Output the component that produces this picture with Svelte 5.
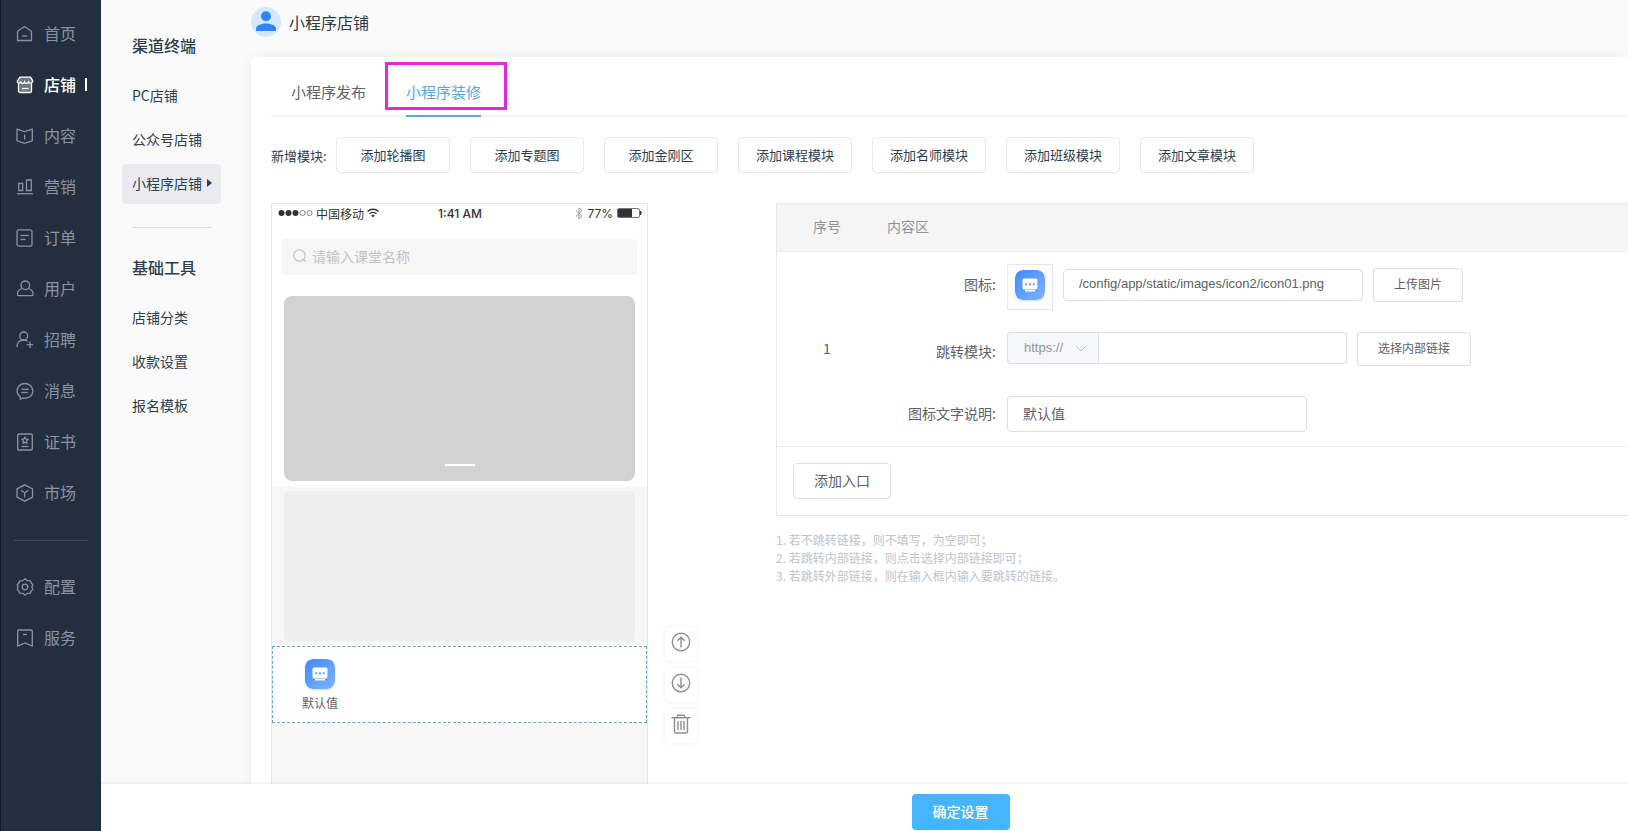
<script lang="ts">
	type NavItem = { label: string; paths: string[]; active?: boolean };

	const mainNav: NavItem[] = [
		{ label: '首页', paths: ['M1.5 6.3v9.2h14V6.3l-7-4.8z', 'M6 11h5.5'] },
		{
			label: '店铺',
			active: true,
			paths: [
				'M4 1.2h10.5l2.3 3.6c.2 2.2-3 3.4-4.2 1.2-.8 2-3.4 2-4 0-.6 2-3.2 2-4 0C3.4 8.2.8 7 1.5 4.8z',
				'M2.500 7.600v7.400a1.500 1.500 0 0 0 1.500 1.500h10a1.500 1.500 0 0 0 1.500-1.500V7.600',
				'M6 12.500h6.500'
			]
		},
		{ label: '内容', paths: ['M1 2.200l7.500 2.300 7.800-2.300v11.600l-7.800 2.500L1 13.800z', 'M8.600 7.500v5'] },
		{ label: '营销', paths: ['M2.700 5.500h4v7h-4z', 'M10.500 2h4.800v10.500h-4.800z', 'M1 15.700h16'] },
		{
			label: '订单',
			paths: ['M3 .8h11a2 2 0 0 1 2 2v12.400a2 2 0 0 1-2 2H3a2 2 0 0 1-2-2V2.800a2 2 0 0 1 2-2z', 'M4.500 6.500h8.500', 'M4.500 10.500h5']
		},
		{
			label: '用户',
			paths: ['M9.300 1a4.300 4.300 0 1 1 0 8.600 4.300 4.300 0 0 1 0-8.600z', 'M6 8.500c-2.600 1-4.500 2.800-4.500 5v1.200q0 1 1 1h13.500q1 0 1-1v-1.200c0-2.200-1.900-4-4.500-5']
		},
		{
			label: '招聘',
			paths: ['M7.700 1a4 4 0 1 1 0 8 4 4 0 0 1 0-8z', 'M1 16c0-4 2.500-7 6.700-7 1.500 0 2.800.4 3.800 1.300', 'M14 10.500v6.500', 'M10.800 13.700h6.500']
		},
		{
			label: '消息',
			paths: ['M4.300 14.500v2.600l3.300-1.200c5 1 9.200-2.200 9.200-6.800 0-4.300-3.500-7.600-7.900-7.600S1 4.800 1 9c0 2.200 1.200 4.300 3.300 5.500z', 'M5.300 7.300h7.500', 'M5.300 10.500h6.500']
		},
		{
			label: '证书',
			paths: ['M3 1h12q1.300 0 1.300 1.300v13.400q0 1.300-1.300 1.300H3q-1.300 0-1.300-1.300V2.300Q1.700 1 3 1z', 'M9 4.300l1 1.700 2 .5-1.300 1.600.2 2L9 9.300l-1.900.8.2-2L6 6.500 8 6z', 'M5.500 13.500h7']
		},
		{ label: '市场', paths: ['M8.700.8l7.800 4v8.400l-7.800 4-7.700-4V4.800z', 'M5 6.300l3.700 2.500 3.800-2.500', 'M8.700 8.800v4.500'] }
	];

	const extraNav: NavItem[] = [
		{
			label: '配置',
			paths: [
				'M9 .8l2.300 1.900 3 .2 1.200 2.600 1.300.9-.9 2.600.9 2.600-1.300 1-1.200 2.500-3 .2L9 17.200l-2.300-1.900-3-.2-1.200-2.500-1.300-1L2.100 9l-.9-2.600 1.300-.9 1.200-2.600 3-.2z',
				'M9 6.200a2.800 2.800 0 1 1 0 5.600 2.800 2.800 0 0 1 0-5.600z'
			]
		},
		{ label: '服务', paths: ['M3 1h12q1.300 0 1.300 1.300V17L9 14l-7.300 3V2.300Q1.700 1 3 1z', 'M7 5.500h4'] }
	];

	const groups = [
		{ title: '渠道终端', items: ['PC店铺', '公众号店铺', '小程序店铺'] },
		{ title: '基础工具', items: ['店铺分类', '收款设置', '报名模板'] }
	];
	const currentPage = '小程序店铺';

	const tabs = ['小程序发布', '小程序装修'];
	let activeTab = $state('小程序装修');

	const modules = ['轮播图', '专题图', '金刚区', '课程模块', '名师模块', '班级模块', '文章模块'];

	const hints = [
		'若不跳转链接，则不填写，为空即可；',
		'若跳转内部链接，则点击选择内部链接即可；',
		'若跳转外部链接，则在输入框内输入要跳转的链接。'
	];

	let keyword = $state('');
	let iconUrl = $state('/config/app/static/images/icon2/icon01.png');
	let protocol = $state('https://');
	let link = $state('');
	let caption = $state('默认值');
</script>

{#snippet navLink(item: NavItem)}
	<a href="#nav" class="nav-item" class:active={item.active}>
		<svg viewBox="0 0 18 18" aria-hidden="true">
			{#each item.paths as d}
				<path {d} />
			{/each}
		</svg>
		<span>{item.label}</span>
	</a>
{/snippet}

{#snippet entryIcon()}
	<svg class="entry-icon" viewBox="0 0 30 30" aria-hidden="true">
		<defs>
			<linearGradient id="entry-bg" x1="0" y1="0" x2="1" y2="1">
				<stop offset="0" stop-color="#3f8bf9" />
				<stop offset="1" stop-color="#7fb3ff" />
			</linearGradient>
		</defs>
		<rect width="30" height="30" rx="8" fill="url(#entry-bg)" />
		<rect x="8" y="10" width="15" height="11" rx="2" fill="#4b86e2" opacity="0.5" />
		<rect x="7.500" y="8.500" width="15" height="11" rx="1.500" fill="#fff" />
		<path d="M10 20.800h10" stroke="#fff" stroke-width="1.400" />
		<path d="M10.200 14.200h2M14 14.200h2M17.800 14.200h2" stroke="#6ba5fa" stroke-width="2" />
	</svg>
{/snippet}

<div class="shell">
	<nav class="sidebar">
		{#each mainNav as item}
			{@render navLink(item)}
		{/each}
		<hr />
		{#each extraNav as item}
			{@render navLink(item)}
		{/each}
	</nav>

	<div class="workspace">
		<div class="body">
			<aside class="subnav">
				{#each groups as group}
					<section>
						<h2>{group.title}</h2>
						{#each group.items as item}
							<a href="#page" class:current={item === currentPage}>
								{item}
								{#if item === currentPage}<i class="caret"></i>{/if}
							</a>
						{/each}
					</section>
				{/each}
			</aside>

			<main>
				<header>
					<svg viewBox="0 0 30 30" aria-hidden="true">
						<circle cx="15" cy="15" r="15" fill="#d5e8ff" />
						<circle cx="15" cy="9.300" r="5" fill="#2e86ff" />
						<path d="M5 24v-2.500c0-3.500 6-5 10-5s10 1.500 10 5V24z" fill="#2e86ff" />
					</svg>
					<h1>小程序店铺</h1>
				</header>

				<div class="card">
					<div class="tabs" role="tablist">
						{#each tabs as tab}
							<button
								type="button"
								role="tab"
								aria-selected={tab === activeTab}
								class:selected={tab === activeTab}
								onclick={() => (activeTab = tab)}
							>
								{tab}
							</button>
						{/each}
					</div>

					<div class="modules">
						<span>新增模块:</span>
						{#each modules as name}
							<button type="button" class="btn">添加{name}</button>
						{/each}
					</div>

					<div class="editor">
						<div class="phone">
							<div class="screen-top">
								<div class="status">
									<div class="carrier">
										<svg width="35" height="8" viewBox="0 0 35 8" aria-hidden="true">
											<g fill="#333">
												<circle cx="3.500" cy="4" r="3" />
												<circle cx="10.500" cy="4" r="3" />
												<circle cx="17.500" cy="4" r="3" />
											</g>
											<g fill="none" stroke="#555" stroke-width="0.700">
												<circle cx="24.500" cy="4" r="2.600" />
												<circle cx="31.500" cy="4" r="2.600" />
											</g>
										</svg>
										<span>中国移动</span>
										<svg width="12" height="10" viewBox="0 0 12 10" aria-hidden="true">
											<g fill="none" stroke="#333" stroke-width="1.500">
												<path d="M.6 3.500a7.600 7.600 0 0 1 10.800 0" />
												<path d="M2.700 5.800a4.700 4.700 0 0 1 6.600 0" />
											</g>
											<path d="M4.200 7.600a2.600 2.600 0 0 1 3.600 0L6 9.500z" fill="#333" />
										</svg>
									</div>
									<strong>1:41 AM</strong>
									<div class="power">
										<svg width="8" height="13" viewBox="0 0 8 13" aria-hidden="true">
											<path d="M1 3.500l6 5.700-3 2.800V1l3 2.800L1 9.500" fill="none" stroke="#999" />
										</svg>
										<span>77%</span>
										<svg width="25" height="10" viewBox="0 0 25 10" aria-hidden="true">
											<rect x=".5" y=".5" width="22" height="9" rx="1.500" fill="none" stroke="#777" />
											<rect x="1" y="1" width="14" height="8" fill="#333" />
											<path d="M23.500 3.200q1.500 1.800 0 3.600z" fill="#333" stroke="#333" />
										</svg>
									</div>
								</div>
								<label class="search">
									<svg width="14" height="14" viewBox="0 0 14 14" aria-hidden="true">
										<circle cx="6.500" cy="6.500" r="5.700" />
										<path d="M10.500 10.500l2.500 2.500" />
									</svg>
									<input type="text" aria-label="搜索" placeholder="请输入课堂名称" bind:value={keyword} />
								</label>
								<div class="banner"><i></i></div>
							</div>
							<div class="placeholder"></div>
							<div class="entries">
								<div class="entry">
									{@render entryIcon()}
									<span>{caption}</span>
								</div>
							</div>
						</div>

						<div class="tools">
							<button type="button" aria-label="上移">
								<svg viewBox="0 0 20 20"><circle cx="10" cy="10" r="8.700" /><path d="M10 15.500V5.500M6.300 8.800L10 5.200l3.700 3.600" /></svg>
							</button>
							<button type="button" aria-label="下移">
								<svg viewBox="0 0 20 20"><circle cx="10" cy="10" r="8.700" /><path d="M10 4.500v10M6.300 11.200l3.700 3.600 3.700-3.600" /></svg>
							</button>
							<button type="button" aria-label="删除">
								<svg viewBox="0 0 20 20"><path d="M.5 3.800h19M6 3.500l.8-2.300h6.400l.8 2.300M3.500 4v13.500q0 1.500 1.500 1.500h10q1.500 0 1.500-1.500V4M7 7v9M10 7v9M13 7v9" /></svg>
							</button>
						</div>

						<div class="settings">
							<div class="panel">
								<table>
									<thead>
										<tr>
											<th class="index">序号</th>
											<th>内容区</th>
										</tr>
									</thead>
									<tbody>
										<tr>
											<td class="index">1</td>
											<td class="content">
												<div class="field with-preview">
													<label for="icon-url">图标:</label>
													<div class="preview">{@render entryIcon()}</div>
													<input id="icon-url" class="box" type="text" bind:value={iconUrl} />
													<button type="button" class="btn small">上传图片</button>
												</div>
												<div class="field linked">
													<label for="link">跳转模块:</label>
													<div class="group">
														<div class="prepend">
															<select aria-label="协议" bind:value={protocol}>
																<option>https://</option>
																<option>http://</option>
															</select>
															<svg width="12" height="7" viewBox="0 0 12 7" aria-hidden="true"><path d="M1 1l5 5 5-5" /></svg>
														</div>
														<input id="link" type="text" bind:value={link} />
													</div>
													<button type="button" class="btn small">选择内部链接</button>
												</div>
												<div class="field">
													<label for="caption">图标文字说明:</label>
													<input id="caption" class="box tall" type="text" bind:value={caption} />
												</div>
											</td>
										</tr>
									</tbody>
								</table>
								<div class="panel-foot">
									<button type="button" class="btn add">添加入口</button>
								</div>
							</div>
							<div class="hints">
								{#each hints as hint, i}
									<p>{i + 1}. {hint}</p>
								{/each}
							</div>
						</div>
					</div>
				</div>
			</main>
		</div>

		<footer>
			<button type="button" class="submit">确定设置</button>
		</footer>
	</div>
</div>

<style>
	:global(body) {
		margin: 0;
	}
	.shell {
		--border: #dcdfe6;
		--ink: #2c3e50;
		--text: #606266;
		display: flex;
		height: 100vh;
		overflow: hidden;
		background: #fafafa;
		color: var(--text);
		font-family: 'Noto Sans CJK SC', sans-serif;
		font-size: 14px;
	}
	.shell * {
		box-sizing: border-box;
	}
	button,
	input,
	select {
		font-family: inherit;
		color: inherit;
	}
	button {
		cursor: pointer;
	}
	a {
		text-decoration: none;
	}

	/* dark primary navigation */
	.sidebar {
		flex: none;
		width: 101px;
		padding-top: 8px;
		border-left: 1px solid #0f1a26;
		background: #232f3f;
	}
	.nav-item {
		display: flex;
		align-items: center;
		gap: 10px;
		height: 51px;
		padding-left: 15px;
		color: #8a93a3;
		font-size: 16px;
	}
	.nav-item span {
		padding-bottom: 2px;
	}
	.nav-item svg {
		width: 18px;
		height: 18px;
		fill: none;
		stroke: currentColor;
		stroke-width: 1.3;
	}
	.nav-item.active {
		color: #fff;
		font-weight: 500;
	}
	.nav-item.active svg {
		fill: rgba(255, 255, 255, 0.35);
	}
	.nav-item.active::after {
		content: '';
		width: 2px;
		height: 13px;
		margin-left: -1px;
		background: #fff;
	}
	.sidebar hr {
		height: 1px;
		margin: 22px 13px 20px;
		border: 0;
		background: #424d5c;
	}

	.workspace {
		display: flex;
		flex: 1;
		flex-direction: column;
		min-width: 0;
	}
	.body {
		display: flex;
		flex: 1;
		min-height: 0;
		overflow: hidden;
	}

	.subnav {
		flex: none;
		width: 150px;
		padding: 17px 30px 0 21px;
	}
	.subnav h2 {
		margin: 0 0 19px;
		padding: 16px 10px 0;
		color: var(--ink);
		font-size: 16px;
		font-weight: 500;
		line-height: 24px;
	}
	.subnav a {
		display: flex;
		align-items: center;
		height: 40px;
		margin-bottom: 4px;
		padding: 0 0 2px 10px;
		border-radius: 4px;
		color: var(--ink);
		white-space: nowrap;
	}
	.subnav a.current {
		background: #e9ebf0;
	}
	.caret {
		margin-left: 5px;
		border: 4px solid transparent;
		border-right: 0;
		border-left: 5px solid var(--ink);
	}
	.subnav section + section::before {
		content: '';
		display: block;
		height: 1px;
		margin: 23px 9px 11px 10px;
		background: #dcdee2;
	}

	main {
		display: flex;
		flex: 1;
		flex-direction: column;
		min-width: 0;
	}
	header {
		display: flex;
		align-items: center;
		gap: 8px;
		padding: 7px 0 20px;
	}
	header svg {
		width: 30px;
		height: 30px;
	}
	h1 {
		margin: 0;
		color: #303a46;
		font-size: 16px;
		font-weight: 400;
		line-height: 30px;
	}

	.card {
		display: flex;
		flex: 1;
		flex-direction: column;
		padding: 5px 0 0 20px;
		border-radius: 5px 0 0 0;
		background: #fff;
		box-shadow: 0 0 12px rgba(0, 0, 0, 0.06);
	}
	.tabs {
		display: flex;
		gap: 40px;
		padding-left: 20px;
		border-bottom: 2px solid #f5f5f5;
	}
	.tabs button {
		position: relative;
		height: 55px;
		margin-bottom: -2px;
		padding: 6px 0 0;
		border: 0;
		border-bottom: 2px solid transparent;
		background: none;
		font-size: 15px;
		line-height: 43px;
	}
	.tabs button.selected {
		border-color: #5fa8d3;
		color: #55a9e2;
	}
	.tabs button.selected::before {
		content: '';
		position: absolute;
		inset: 0 -26px 5px -21px;
		border: 3px solid #df2bdf;
	}

	.btn {
		height: 36px;
		padding: 0 0 2px;
		border: 1px solid var(--border);
		border-radius: 4px;
		background: #fff;
	}
	.modules {
		display: flex;
		align-items: center;
		gap: 20px;
		padding: 20px 0 30px;
		color: var(--ink);
		font-size: 13px;
		white-space: nowrap;
	}
	.modules span {
		width: 65px;
		margin-right: -20px;
	}
	.modules .btn {
		width: 114px;
		border-color: #e4e7ed;
		font-size: 13px;
	}

	.editor {
		display: flex;
		flex: 1;
	}
	.phone {
		flex: none;
		width: 377px;
		border: 1px solid #e6e6e6;
		border-bottom: 0;
		background: #f7f7f7;
	}
	.screen-top {
		padding: 0 10px 5px;
		background: #fff;
	}
	.status {
		display: grid;
		grid-template-columns: 1fr auto 1fr;
		align-items: center;
		height: 18px;
		margin: 0 -5px 17px -4px;
		color: #333;
		font-family: Inter, 'Noto Sans CJK SC', sans-serif;
		font-size: 12px;
	}
	.status strong {
		font-weight: 500;
	}
	.carrier,
	.power {
		display: flex;
		align-items: center;
		gap: 4px;
	}
	.carrier {
		gap: 3px;
	}
	.power {
		justify-content: flex-end;
	}
	.search {
		display: flex;
		align-items: center;
		gap: 5px;
		height: 36px;
		padding: 0 0 2px 11px;
		border-radius: 4px;
		background: #f6f6f6;
	}
	.search svg {
		fill: none;
		stroke: #c0c4cc;
		stroke-width: 1.2;
	}
	.search input {
		flex: 1;
		min-width: 0;
		padding: 0;
		border: 0;
		background: none;
		font-size: 14px;
	}
	.search input::placeholder {
		color: #c0c4cc;
	}
	.banner {
		display: flex;
		align-items: flex-end;
		justify-content: center;
		height: 185px;
		margin: 21px 2px 0;
		padding-bottom: 15px;
		border-radius: 8px;
		background: #d2d2d2;
	}
	.banner i {
		width: 30px;
		height: 2px;
		background: #fff;
	}
	.placeholder {
		height: 150px;
		margin: 5px 12px;
		border-radius: 5px;
		background: #eee;
	}
	.entries {
		height: 77px;
		padding: 12px 9px 0;
		border: 1px dashed #5fa8d3;
		background: #fff;
	}
	.entry {
		display: flex;
		flex-direction: column;
		align-items: center;
		gap: 5px;
		width: 76px;
		font-size: 12px;
		line-height: 18px;
	}
	.entry-icon {
		width: 30px;
		height: 30px;
		border-radius: 8px;
		box-shadow: 0 1px 2px rgba(64, 140, 250, 0.3);
	}

	.tools {
		display: flex;
		flex: none;
		flex-direction: column;
		gap: 7px;
		width: 32px;
		margin: 424px 79px 0 17px;
	}
	.tools button {
		height: 34px;
		padding: 0 0 4px;
		border: 0;
		border-radius: 5px;
		background: #fff;
		box-shadow: 0 0 4px rgba(0, 0, 0, 0.07);
	}
	.tools svg {
		display: block;
		width: 20px;
		height: 20px;
		margin: auto;
		fill: none;
		stroke: #8f8f8f;
		stroke-width: 1.4;
	}

	.settings {
		flex: 1;
		min-width: 0;
	}
	.panel {
		border: 1px solid #e4e7ed;
		border-right: 0;
	}
	table {
		width: 100%;
		border-collapse: collapse;
	}
	th,
	td {
		padding: 0 10px 2px;
		border-bottom: 1px solid #ebeef5;
		text-align: left;
	}
	th {
		height: 47px;
		background: #f5f5f5;
		color: #909399;
		font-weight: 400;
	}
	td.content {
		padding: 12px 10px 9px 8px;
	}
	.index {
		width: 100px;
		text-align: center;
	}
	.field {
		display: flex;
		align-items: center;
		gap: 10px;
		height: 46px;
	}
	.field label {
		flex: none;
		width: 111px;
		padding-bottom: 2px;
		text-align: right;
	}
	.field > label + * {
		margin-left: 1px;
	}
	.with-preview {
		padding-bottom: 4px;
	}
	.preview {
		display: flex;
		align-items: center;
		align-self: flex-start;
		justify-content: center;
		width: 46px;
		height: 46px;
		padding-bottom: 3px;
		border: 1px solid #e4e7ed;
	}
	.linked {
		align-items: flex-start;
		height: 40px;
		margin: 22px 0 19px;
		line-height: 38px;
	}
	.box,
	.group input {
		height: 32px;
		padding: 0 15px 2px;
		border: 1px solid var(--border);
		border-radius: 4px;
		background: #fff;
		font-family: 'Liberation Sans', 'Noto Sans CJK SC', sans-serif;
		font-size: 13px;
	}
	.box {
		width: 300px;
	}
	.box.tall {
		height: 36px;
		font-size: 14px;
	}
	.btn.small {
		width: 90px;
		height: 34px;
		border-radius: 3px;
		font-size: 12px;
	}
	.linked .btn.small {
		width: 114px;
	}
	.group {
		display: flex;
		width: 340px;
	}
	.prepend {
		position: relative;
		flex: none;
		width: 92px;
		height: 32px;
	}
	.prepend select {
		display: block;
		width: 100%;
		height: 32px;
		padding: 0 16px;
		border: 1px solid var(--border);
		border-radius: 4px 0 0 4px;
		background: #f5f7fa;
		color: #909399;
		appearance: none;
		font-family: 'Liberation Sans', sans-serif;
		font-size: 13px;
	}
	.prepend svg {
		position: absolute;
		top: 13px;
		right: 12px;
		fill: none;
		stroke: #c0c4cc;
		pointer-events: none;
	}
	.group input {
		flex: 1;
		min-width: 0;
		border-left: 0;
		border-radius: 0 4px 4px 0;
	}
	.panel-foot {
		padding: 16px;
	}
	.panel-foot .btn,
	.submit {
		display: block;
		width: 98px;
		height: 36px;
		font-size: 14px;
	}
	.hints {
		margin-top: 15px;
		color: #c0c4cc;
		font-size: 12px;
		line-height: 18px;
	}
	.hints p {
		margin: 0;
	}

	footer {
		display: flex;
		flex: none;
		justify-content: center;
		height: 47px;
		padding: 10px 0 0 192px;
		background: #fff;
		box-shadow: 0 0 3px rgba(0, 0, 0, 0.16);
		z-index: 1;
	}
	.submit {
		padding: 0 0 2px;
		border: 0;
		border-radius: 4px;
		background: #46b4ff;
		color: #fff;
		font-weight: 500;
	}
</style>
